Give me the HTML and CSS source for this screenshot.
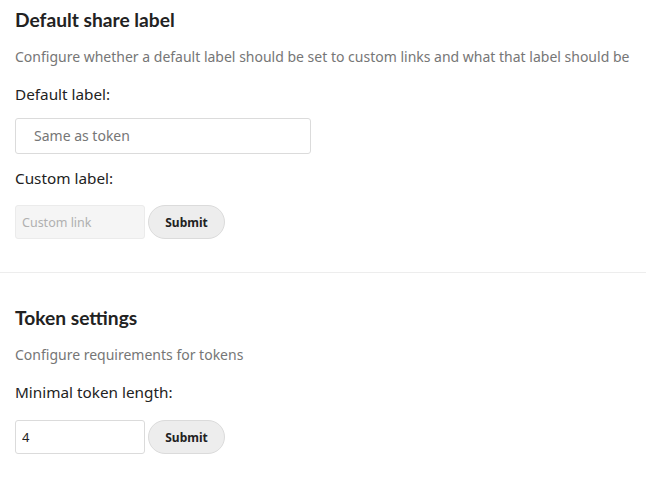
FILE: index.html
```html
<!DOCTYPE html>
<html>
<head>
<meta charset="utf-8">
<link rel="stylesheet" href="styles.css">
</head>
<body>
<div class="section first">
  <h2 class="title">Default share label</h2>
  <p class="desc">Configure whether a default label should be set to custom links and what that label should be</p>
  <label class="label">Default label:</label>
  <div class="select">Same as token</div>
  <label class="label label-gap">Custom label:</label>
  <div class="row">
    <input class="input input-disabled" type="text" placeholder="Custom link" disabled>
    <button class="btn">Submit</button>
  </div>
</div>
<div class="section">
  <h2 class="title">Token settings</h2>
  <p class="desc">Configure requirements for tokens</p>
  <label class="label">Minimal token length:</label>
  <div class="row row2">
    <input class="input" type="text" value="4">
    <button class="btn">Submit</button>
  </div>
</div>
</body>
</html>
```
FILE: styles.css
```css
html, body {
  margin: 0;
  padding: 0;
  background: #fff;
  font-family: "Noto Sans", "Open Sans", sans-serif;
  color: #222;
}
.section {
  padding: 30px 15px 33px;
  border-bottom: 1px solid #ededed;
  width: 616px;
}
.section.first {
  padding-top: 5px;
}
.section:last-child {
  border-bottom: none;
}
.title {
  margin: 0;
  font-family: Lato, "Noto Sans", sans-serif;
  font-size: 19.2px;
  line-height: 30px;
  font-weight: 700;
  color: #222;
}
.desc {
  margin: 12px 0 0;
  font-size: 14px;
  line-height: 20px;
  color: #767676;
  white-space: nowrap;
}
.label {
  display: block;
  margin-top: 17px;
  font-size: 15.3px;
  line-height: 20px;
  color: #222;
}
.label-gap {
  margin-top: 14px;
}
.select {
  margin-top: 14px;
  width: 258px;
  height: 34px;
  border: 1px solid #dbdbdb;
  border-radius: 3px;
  padding: 0 18px;
  font-size: 14px;
  line-height: 34px;
  color: #767676;
}
.row {
  margin-top: 17px;
  display: flex;
  gap: 3px;
  align-items: center;
}
.row2 {
  margin-top: 18px;
}
.input {
  box-sizing: border-box;
  width: 130px;
  height: 34px;
  margin: 0;
  border: 1px solid #dbdbdb;
  border-radius: 3px;
  padding: 0 6px;
  font-family: inherit;
  font-size: 13px;
  color: #222;
  background: #fff;
  outline: none;
}
.input-disabled {
  background: #f5f5f5;
  border-color: #ebebeb;
  font-size: 12.5px;
}
.input-disabled::placeholder {
  color: #b0b0b0;
}
.btn {
  box-sizing: border-box;
  height: 34px;
  width: 77px;
  margin: 0;
  border: 1px solid #dbdbdb;
  border-radius: 17px;
  background: #ededed;
  font-family: inherit;
  font-size: 12px;
  font-weight: 700;
  color: #222;
  padding: 0;
}
```
